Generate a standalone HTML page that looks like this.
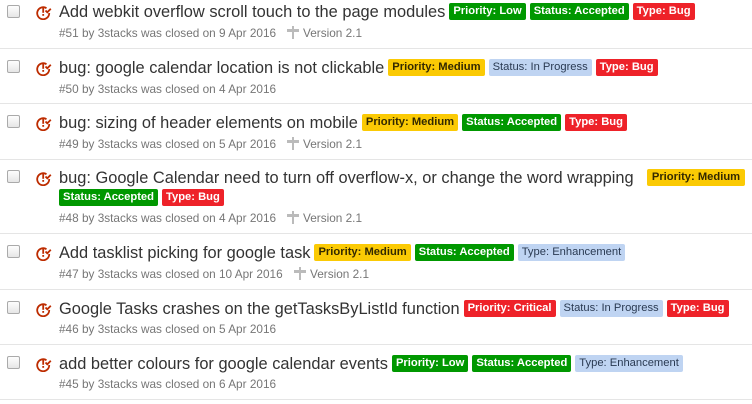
<!DOCTYPE html>
<html><head><meta charset="utf-8"><style>
body{margin:0;width:752px;height:404px;background:#fff;font-family:"Liberation Sans",Arial,sans-serif;position:relative;overflow:hidden}
.a{position:absolute;white-space:nowrap}
.t{font-size:16.4px;color:#333;line-height:18px}
.m{font-size:11.8px;color:#767676;line-height:14px}
.l{display:inline-block;vertical-align:top;margin-left:4px;height:17px;line-height:17px;font-size:11.2px;font-weight:bold;text-align:center;border-radius:2px;white-space:nowrap;overflow:hidden;padding:0 4px}
.t .l:first-child{margin-left:4px}
.g{background:#009800;color:#fff}.y{background:#fbca04;color:#332900}.b{background:#bfd4f2;color:#2a3a52;font-weight:normal}.r{background:#ee2229;color:#fff}
.cb{position:absolute;left:7px;width:11px;height:11px;border:1px solid #aaa;border-radius:2px;background:linear-gradient(#fdfdfd,#e6e6e6)}
.hr{position:absolute;left:0;width:752px;height:1px;background:#e5e5e5}
.ic{position:absolute;left:36px}
.ms{position:absolute}
</style></head><body>
<svg width="0" height="0" style="position:absolute"><defs>
<g id="iss"><path d="M10.5 4.2A6 6 0 1 0 13.2 9" fill="none" stroke="#bd2c00" stroke-width="1.8"/><rect x="6.3" y="3.8" width="1.8" height="5" fill="#bd2c00"/><rect x="6.3" y="10" width="1.8" height="1.8" fill="#bd2c00"/><path d="M9.5 6.5l1.8 1.8 3.5-3.5" fill="none" stroke="#bd2c00" stroke-width="1.8"/></g>
<g id="mil"><rect x="5" y="0" width="2" height="13" fill="#bbb"/><rect x="0" y="3" width="12" height="3" fill="#bbb"/></g>
</defs></svg>

<div class="cb" style="top:5px"></div><svg class="ic" style="top:4px" width="16" height="16"><use href="#iss"/></svg>
<div class="a t" style="left:59px;top:3px">Add webkit overflow scroll touch to the page modules<span class="l g">Priority: Low</span><span class="l g">Status: Accepted</span><span class="l r">Type: Bug</span></div>
<div class="a m" style="left:59px;top:26px">#51 by 3stacks was closed on 9 Apr 2016</div>
<svg class="ms" style="left:287px;top:26px" width="12" height="14"><use href="#mil"/></svg><div class="a m" style="left:303px;top:26px">Version 2.1</div>
<div class="hr" style="top:48px"></div>

<div class="cb" style="top:60px"></div><svg class="ic" style="top:60px" width="16" height="16"><use href="#iss"/></svg>
<div class="a t" style="left:59px;top:59px">bug: google calendar location is not clickable<span class="l y">Priority: Medium</span><span class="l b">Status: In Progress</span><span class="l r">Type: Bug</span></div>
<div class="a m" style="left:59px;top:82px">#50 by 3stacks was closed on 4 Apr 2016</div>
<div class="hr" style="top:103px"></div>

<div class="cb" style="top:115px"></div><svg class="ic" style="top:115px" width="16" height="16"><use href="#iss"/></svg>
<div class="a t" style="left:59px;top:114px">bug: sizing of header elements on mobile<span class="l y">Priority: Medium</span><span class="l g">Status: Accepted</span><span class="l r">Type: Bug</span></div>
<div class="a m" style="left:59px;top:137px">#49 by 3stacks was closed on 5 Apr 2016</div>
<svg class="ms" style="left:287px;top:137px" width="12" height="14"><use href="#mil"/></svg><div class="a m" style="left:303px;top:137px">Version 2.1</div>
<div class="hr" style="top:159px"></div>

<div class="cb" style="top:170px"></div><svg class="ic" style="top:170px" width="16" height="16"><use href="#iss"/></svg>
<div class="a t" style="left:59px;top:169px">bug: Google Calendar need to turn off overflow-x, or change the word wrapping</div>
<div class="a" style="left:643px;top:169px"><span class="l y" style="width:90px">Priority: Medium</span></div>
<div class="a" style="left:55px;top:189px"><span class="l g">Status: Accepted</span><span class="l r">Type: Bug</span></div>
<div class="a m" style="left:59px;top:211px">#48 by 3stacks was closed on 4 Apr 2016</div>
<svg class="ms" style="left:287px;top:211px" width="12" height="14"><use href="#mil"/></svg><div class="a m" style="left:303px;top:211px">Version 2.1</div>
<div class="hr" style="top:233px"></div>

<div class="cb" style="top:245px"></div><svg class="ic" style="top:245px" width="16" height="16"><use href="#iss"/></svg>
<div class="a t" style="left:59px;top:244px">Add tasklist picking for google task<span class="l y">Priority: Medium</span><span class="l g">Status: Accepted</span><span class="l b">Type: Enhancement</span></div>
<div class="a m" style="left:59px;top:267px">#47 by 3stacks was closed on 10 Apr 2016</div>
<svg class="ms" style="left:294px;top:267px" width="12" height="14"><use href="#mil"/></svg><div class="a m" style="left:310px;top:267px">Version 2.1</div>
<div class="hr" style="top:289px"></div>

<div class="cb" style="top:301px"></div><svg class="ic" style="top:301px" width="16" height="16"><use href="#iss"/></svg>
<div class="a t" style="left:59px;top:300px">Google Tasks crashes on the getTasksByListId function<span class="l r">Priority: Critical</span><span class="l b">Status: In Progress</span><span class="l r">Type: Bug</span></div>
<div class="a m" style="left:59px;top:322px">#46 by 3stacks was closed on 5 Apr 2016</div>
<div class="hr" style="top:344px"></div>

<div class="cb" style="top:356px"></div><svg class="ic" style="top:356px" width="16" height="16"><use href="#iss"/></svg>
<div class="a t" style="left:59px;top:355px">add better colours for google calendar events<span class="l g">Priority: Low</span><span class="l g">Status: Accepted</span><span class="l b">Type: Enhancement</span></div>
<div class="a m" style="left:59px;top:377px">#45 by 3stacks was closed on 6 Apr 2016</div>
<div class="hr" style="top:399px"></div>
</body></html>
